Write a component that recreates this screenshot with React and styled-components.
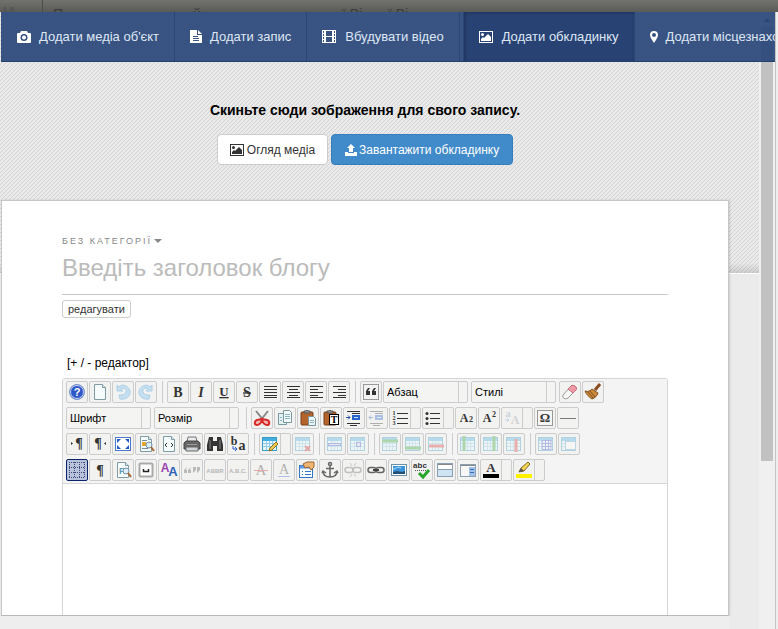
import React, { useState } from 'react';
import styled, { createGlobalStyle, css } from 'styled-components';

const GlobalStyle = createGlobalStyle`
  * {
    box-sizing: border-box;
  }

  body {
    margin: 0;
    overflow: hidden;
    background: #eee;
    font-family: "Liberation Sans", Arial, sans-serif;
    font-size: 12px;
    color: #000;
  }

  button,
  input,
  select {
    font-family: inherit;
  }
`;

const Page = styled.div`
  display: flex;
  flex-direction: column;
  height: 100vh;
`;

const Backdrop = styled.div`
  display: flex;
  flex: none;
  height: 12px;
  padding-top: 7px;
  overflow: hidden;
  background: linear-gradient(#72726f, #5a5a57);
  color: #3c3c3a;
  font-size: 14px;
  line-height: 14px;
`;

const BackdropLogo = styled.b`
  width: 43px;
  margin-top: -7px;
  padding: 5px 0 0 3px;
  border-right: 1px solid #4c4c4a;
  color: #555553;
`;

const BackdropText = styled.span`
  width: ${props => props.$width}px;
  padding-left: 10px;
`;

const Window = styled.div`
  position: relative;
  display: flex;
  flex: 1;
  min-height: 0;
`;

const Nav = styled.nav`
  position: absolute;
  z-index: 2;
  top: 0;
  left: 1px;
  right: 3px;
  display: flex;
  height: 50px;
  overflow: hidden;
  border-bottom: 1px solid #24406f;
  background: rgba(41, 70, 120, 0.92);
`;

const NavItem = styled.button`
  display: flex;
  flex: none;
  align-items: center;
  gap: 8px;
  padding: 0 15px;
  border: 0;
  border-right: 1px solid #2b4672;
  background: transparent;
  color: #dfe7f5;
  font-size: 13px;
  cursor: pointer;

  svg {
    fill: #fff;
  }

  ${props =>
    props.$active &&
    css`
      margin-left: 3px;
      border-left: 1px solid #2b4672;
      background: #284273;
      box-shadow: inset 1px 1px 3px #1d335c;
    `}
`;

const Scroller = styled.div`
  display: flex;
  flex: 1;
  flex-direction: column;
  min-width: 0;
  background: #ebebeb;
`;

const Cover = styled.section`
  display: flex;
  flex: none;
  flex-direction: column;
  align-items: center;
  height: 262px;
  padding: 90px 30px 0 1px;
  border-bottom: 1px solid #fff;
  background:
    linear-gradient(transparent 251px, rgba(0, 0, 0, 0.12)),
    linear-gradient(135deg, #d3d3d3 19%, #eaeaea 19% 56%, #d3d3d3 56% 69%, #eaeaea 69%) 0 0 / 4px 4px;
`;

const CoverTitle = styled.h1`
  margin: 0 0 16px;
  font-size: 14px;
  line-height: 16px;
`;

const CoverActions = styled.div`
  display: flex;
  gap: 3px;
`;

const CoverButton = styled.button`
  display: flex;
  align-items: center;
  gap: 2px;
  height: 31px;
  padding: 0 ${props => (props.$primary ? 13 : 12)}px;
  border: 1px solid ${props => (props.$primary ? '#357ebd' : '#ccc')};
  border-radius: 4px;
  background: ${props => (props.$primary ? '#428bca' : '#fff')};
  color: ${props => (props.$primary ? '#fff' : '#333')};
  font-size: 12px;
  cursor: pointer;

  svg {
    fill: currentColor;
  }
`;

const Card = styled.main`
  display: flex;
  flex: 1;
  flex-direction: column;
  min-height: 0;
  margin: -74px 30px 0 1px;
  padding: 33px 60px 0;
  border: 1px solid #c6c6c6;
  border-bottom-color: #b8b8b8;
  background: #fff;
  box-shadow: 1px 0 2px rgba(0, 0, 0, 0.12);
`;

const Category = styled.button`
  display: flex;
  align-items: center;
  align-self: flex-start;
  gap: 2px;
  height: 14px;
  padding: 0;
  border: 0;
  background: none;
  color: #888;
  font-size: 9px;
  letter-spacing: 2px;
  text-transform: uppercase;

  &::after {
    content: '';
    border: 4px solid transparent;
    border-top-color: #888;
    border-bottom: 0;
  }
`;

const TitleInput = styled.input`
  width: 100%;
  height: 47px;
  padding: 0 0 6px;
  border: 0;
  border-bottom: 1px solid #c8c8c8;
  outline: none;
  background: none;
  font-size: 24px;

  &::placeholder {
    color: #bbb;
    opacity: 1;
  }
`;

const EditButton = styled.button`
  align-self: flex-start;
  height: 18px;
  margin: 5px 0 38px;
  padding: 0 5px;
  border: 1px solid #ccc;
  border-radius: 3px;
  background: #fff;
  color: #333;
  font-size: 11px;
  line-height: 14px;
`;

const ToggleLink = styled.a`
  align-self: flex-start;
  margin: 0 5px 7px;
  color: #000;
  font-size: 12px;
  line-height: 15px;
  text-decoration: none;
`;

const Editor = styled.div`
  display: flex;
  flex: 1;
  flex-direction: column;
  min-height: 0;
  border: 1px solid #d6d6d6;
  border-bottom: 0;
  border-radius: 3px 3px 0 0;
`;

const Toolbar = styled.div`
  display: flex;
  flex: none;
  flex-direction: column;
  gap: 4px;
  padding: 2px 3px;
  border-bottom: 1px solid #d6d6d6;
  background: #f4f4f4;
`;

const ToolRow = styled.div`
  display: flex;
  gap: 1px;
  height: 22px;
`;

const Tool = styled.button`
  display: flex;
  flex: none;
  width: ${props => (props.$split ? 32 : 22)}px;
  height: 22px;
  padding: 0;
  border: 1px solid #ccc;
  border-radius: 2px;
  background: #f2f2f1;

  svg {
    flex: none;
    opacity: ${props => (props.disabled ? 0.35 : 1)};
  }

  ${props =>
    props.$split &&
    css`
      &::after {
        content: '';
        height: 20px;
        border-left: 1px solid #ccc;
      }
    `}

  ${props =>
    props.$active &&
    css`
      border-color: #0a246a;
      background: #b9c3dc;
    `}
`;

const Separator = styled.span`
  width: 1px;
  margin: 0 3px 0 4px;
  background: #ccc;
`;

const ListBox = styled.label`
  display: flex;
  width: 85px;
  height: 22px;
  margin-right: 2px;
  padding-right: 8px;
  border: 1px solid #ccc;
  border-radius: 2px;
  background: #f4f4f3;

  select {
    width: 75px;
    padding: 0 0 0 3px;
    border: 0;
    border-right: 1px solid #ccc;
    appearance: none;
    background: none;
    color: #000;
    font-size: 11px;
  }
`;

const EditArea = styled.div`
  flex: 1;
  outline: none;
`;

const Footer = styled.footer`
  flex: none;
  height: 13px;
  margin-right: 30px;
  background: #eee;
`;

const ScrollTrack = styled.div`
  width: 16px;
  padding: 6px 2px 0;
  background: #f0f0f0;

  &::before {
    content: '';
    display: block;
    width: 0;
    margin: 0 2px 5px;
    border: 4px solid transparent;
    border-top: 0;
    border-bottom-color: #505050;
  }
`;

const ScrollThumb = styled.div`
  height: 71%;
  background: #c1c1c1;
`;

const Edge = styled.div`
  width: 3px;
  border-left: 1px solid #c4c4c4;
  background: #eee;
`;

const SERIF = '"Liberation Serif", "Times New Roman", serif';

function Svg({ children }) {
  return (
    <svg width="20" height="20" viewBox="0 0 20 20" fill="none" aria-hidden="true">
      {children}
    </svg>
  );
}

function Glyph({ children, x = 10, y = 15, size = 14, ...rest }) {
  return (
    <text x={x} y={y} fontSize={size} fontFamily={SERIF} fontWeight="bold" fill="#333" textAnchor="middle" {...rest}>
      {children}
    </text>
  );
}

function Lines({ rows, color = '#333', width = 1 }) {
  return rows.map(([x, y, w]) => <rect key={`${x}-${y}`} x={x} y={y} width={w} height={width} fill={color} />);
}

const sheet = (
  <>
    <path d="M4.5 2.500h8l3 3v12h-11z" fill="#f6fbfc" stroke="#7f9ba3" />
    <path d="M12.500 2.500v3h3" fill="#dcebee" stroke="#7f9ba3" />
  </>
);

const grid = (
  <>
    <rect x="2.500" y="3.500" width="14" height="13" fill="#e9f6fc" stroke="#3b9cc6" />
    <path d="M3 5.500h13" stroke="#42aee0" strokeWidth="3" />
    <path d="M3 9.500h13M3 12.500h13M6.500 7v9M9.500 7v9M12.500 7v9" stroke="#8fcbe6" />
  </>
);

const lens = (
  <>
    <circle cx="13" cy="11" r="3" fill="#d9eef8" stroke="#7290a6" />
    <path d="M15 13l3 4" stroke="#a9672f" strokeWidth="2" />
  </>
);

const clipboard = (
  <>
    <rect x="3" y="4" width="12" height="13" rx="1" fill="#b4642a" stroke="#74401b" />
    <path d="M6 5V3h2l1-1 1 1h2v2z" fill="#999" stroke="#555" />
  </>
);

const chain = (
  <>
    <rect x="2" y="7.500" width="8" height="5" rx="2.500" stroke="#666" strokeWidth="1.500" />
    <rect x="10" y="7.500" width="8" height="5" rx="2.500" stroke="#666" strokeWidth="1.500" />
  </>
);

const icons = {
  help: (
    <>
      <circle cx="10" cy="10" r="7.500" fill="#2e57c8" stroke="#8196c8" />
      <circle cx="10" cy="10" r="6.500" stroke="#c9d6f5" />
      <text x="10" y="14" fontSize="11" fontWeight="bold" fill="#fff" textAnchor="middle">?</text>
    </>
  ),
  newPage: sheet,
  undo: <path d="M4 3v6h6L8 7c3-2 6 0 5 3s-4 3-7 3l1 4c6 1 11-3 10-8S9 1 6 5z" fill="#72bdf2" stroke="#2f92d6" />,
  redo: <path d="M16 3v6h-6l2-2C9 5 6 7 7 10s4 3 7 3l-1 4C7 18 2 14 3 9s8-8 11-4z" fill="#72bdf2" stroke="#2f92d6" />,
  bold: <Glyph>B</Glyph>,
  italic: <Glyph fontStyle="italic">I</Glyph>,
  underline: <Glyph y={14} size={13} textDecoration="underline">U</Glyph>,
  strike: <Glyph textDecoration="line-through">S</Glyph>,
  full: <Lines rows={[[4, 4, 13], [4, 7, 13], [4, 10, 13], [4, 13, 13], [4, 15, 13]]} />,
  center: <Lines rows={[[4, 4, 13], [6, 7, 9], [4, 10, 13], [6, 13, 9], [4, 15, 13]]} />,
  left: <Lines rows={[[4, 4, 13], [4, 7, 8], [4, 10, 13], [4, 13, 8], [4, 15, 13]]} />,
  right: <Lines rows={[[4, 4, 13], [9, 7, 8], [4, 10, 13], [9, 13, 8], [4, 15, 13]]} />,
  quote: (
    <>
      <rect x="2.500" y="2.500" width="15" height="15" fill="#f3f3f3" stroke="#999" />
      <path d="M9 6H7L5 9v4h4V9H7zM15 6h-2l-2 3v4h4V9h-2z" fill="#333" />
    </>
  ),
  eraser: (
    <>
      <path d="M3 13l8-9c2-2 7 1 5 4l-8 8c-3 2-6 0-5-3z" fill="#f7f7f7" stroke="#999" />
      <path d="M8 7l3-3c2-2 7 1 5 4l-3 3z" fill="#ef9aa5" stroke="#c8707c" />
    </>
  ),
  broom: (
    <>
      <path d="M12 8l5-6" stroke="#8a4d1f" strokeWidth="3" />
      <path d="M2 9c3 1 5 0 7-2l6 4c-1 3-3 5-6 6-3-2-6-5-7-8z" fill="#c98a3c" stroke="#84501d" />
      <path d="M5 10l5 6M7 9l5 6" stroke="#84501d" />
    </>
  ),
  cut: (
    <>
      <path d="M4 3l8 10M16 3L8 13" stroke="#888" strokeWidth="2" />
      <path d="M10 11l-5 1c-3 1-3 5 0 5s4-2 5-5zM10 11l5 1c3 1 3 5 0 5s-4-2-5-5z" fill="#f3b9b5" stroke="#d62a26" strokeWidth="2" />
    </>
  ),
  copy: (
    <>
      <path d="M3.500 5.500h8v11h-8z" fill="#e2f2f4" stroke="#79979e" />
      <path d="M8.500 2.500h6l2 2v10h-8z" fill="#f2fafb" stroke="#79979e" />
      <path d="M10 6.500h5M10 8.500h5M10 10.500h5M5 9.500h2M5 12.500h2" stroke="#8fb5c3" />
    </>
  ),
  paste: (
    <>
      {clipboard}
      <path d="M10.500 8.500h5l2 2v7h-7z" fill="#edf5f6" stroke="#79979e" />
      <path d="M12 12.500h4M12 14.500h4" stroke="#8fb5c3" />
    </>
  ),
  pasteText: (
    <>
      {clipboard}
      <rect x="8.500" y="6.500" width="9" height="10" fill="#fff" stroke="#000" />
      <Glyph x={13} size={10} fill="#000">T</Glyph>
    </>
  ),
  indent: (
    <>
      <Lines rows={[[3, 3, 13], [3, 15, 13], [6, 17, 7], [8, 5, 8]]} />
      <path d="M2 9.500h4M4 7.500l2 2-2 2" stroke="#2450a8" />
      <rect x="9" y="8" width="6" height="3" fill="#cddcf8" stroke="#2862cc" strokeWidth="2" />
    </>
  ),
  outdent: (
    <>
      <Lines rows={[[3, 3, 13], [3, 15, 13], [6, 17, 7], [8, 5, 8]]} />
      <path d="M2 9.500h4M4 7.500l-2 2 2 2" stroke="#2450a8" />
      <rect x="9" y="8" width="6" height="3" fill="#cddcf8" stroke="#2862cc" strokeWidth="2" />
    </>
  ),
  numbers: (
    <>
      <Lines rows={[[7, 5, 11], [7, 10, 11], [7, 15, 11]]} />
      <Glyph x={4} y={7} size={6}>1</Glyph>
      <Glyph x={4} y={12} size={6}>2</Glyph>
      <Glyph x={4} y={17} size={6}>3</Glyph>
    </>
  ),
  bullets: (
    <>
      <Lines rows={[[7, 5, 10], [7, 10, 10], [7, 15, 10]]} />
      <circle cx="4" cy="5.500" r="1.500" fill="#333" />
      <circle cx="4" cy="10.500" r="1.500" fill="#333" />
      <circle cx="4" cy="15.500" r="1.500" fill="#333" />
    </>
  ),
  sub: (
    <>
      <Glyph x={8} y={14} size={12}>A</Glyph>
      <Glyph x={15} y={14} size={8}>2</Glyph>
    </>
  ),
  sup: (
    <>
      <Glyph x={8} y={14} size={12}>A</Glyph>
      <Glyph x={15} y={9} size={8}>2</Glyph>
    </>
  ),
  letterCase: (
    <>
      <Glyph x={6} y={9} size={11} fill="#8c9bb8">a</Glyph>
      <Glyph x={13} y={16} size={12} fill="#999">A</Glyph>
      <path d="M3 12h4M5 10l2 2-2 2" stroke="#7e9ddb" />
    </>
  ),
  omega: (
    <>
      <rect x="2.500" y="2.500" width="15" height="15" fill="#f5f5f5" stroke="#999" />
      <Glyph y={14} size={13}>Ω</Glyph>
    </>
  ),
  rule: <path d="M2 10.500h16" stroke="#777" />,
  ltr: (
    <>
      <Glyph x={12} y={14}>¶</Glyph>
      <path d="M4 8l2 1.500L4 11z" fill="#333" />
    </>
  ),
  rtl: (
    <>
      <Glyph x={8} y={14}>¶</Glyph>
      <path d="M16 8l-2 1.500 2 1.500z" fill="#333" />
    </>
  ),
  fullscreen: (
    <>
      <rect x="2.500" y="3.500" width="15" height="13" fill="#fff" stroke="#4b78d0" />
      <path d="M4 9V5h4zM16 9V5h-4zM4 11v4h4zM16 11v4h-4z" fill="#2458c5" />
    </>
  ),
  preview: (
    <>
      {sheet}
      <rect x="6" y="8" width="4" height="4" fill="#e5a631" />
      <path d="M6 6.500h5M6 14.500h6" stroke="#789" />
      {lens}
    </>
  ),
  code: (
    <>
      {sheet}
      <path d="M8 9l-2 2 2 2M12 9l2 2-2 2" stroke="#333" />
    </>
  ),
  print: (
    <>
      <path d="M6 3h8l1 5H5z" fill="#e9edef" stroke="#777" />
      <path d="M2 9l2-2h12l2 2v6H2z" fill="#666" stroke="#444" />
      <path d="M4 13h12v4H4z" fill="#cfd5d8" stroke="#666" />
      <path d="M5 10.500h10" stroke="#999" />
    </>
  ),
  find: (
    <>
      <path d="M4 3h4v4h4V3h4l2 8v6h-6v-5H8v5H2v-6z" fill="#333" />
      <path d="M5 6v9M15 6v9" stroke="#858585" />
    </>
  ),
  replace: (
    <>
      <Glyph x={6} y={11} size={12}>b</Glyph>
      <Glyph x={14} y={16} size={14}>a</Glyph>
      <path d="M5 12v3h4M7 13l2 2-2 2" stroke="#2c5dcb" />
    </>
  ),
  table: (
    <>
      {grid}
      <path d="M9 17l1-3 6-6 2 2-6 6z" fill="#f3cf52" stroke="#8b6a1c" />
    </>
  ),
  tableDelete: (
    <>
      {grid}
      <path d="M12 12l5 5M17 12l-5 5" stroke="#d02525" strokeWidth="2" />
    </>
  ),
  rowProps: (
    <>
      {grid}
      <rect x="3.500" y="9.500" width="12" height="2" fill="#cfd8ff" stroke="#4054c8" />
    </>
  ),
  cellProps: (
    <>
      {grid}
      <rect x="8.500" y="8.500" width="4" height="4" fill="#cfd8ff" stroke="#4054c8" />
    </>
  ),
  rowBefore: (
    <>
      {grid}
      <path d="M2 7h16" stroke="#2ea52e" strokeWidth="3" />
    </>
  ),
  rowAfter: (
    <>
      {grid}
      <path d="M2 14h16" stroke="#2ea52e" strokeWidth="3" />
    </>
  ),
  rowDelete: (
    <>
      {grid}
      <path d="M3 12h15" stroke="#d83535" strokeWidth="3" />
    </>
  ),
  colBefore: (
    <>
      {grid}
      <path d="M6 2v15" stroke="#2ea52e" strokeWidth="3" />
    </>
  ),
  colAfter: (
    <>
      {grid}
      <path d="M13 2v15" stroke="#2ea52e" strokeWidth="3" />
    </>
  ),
  colDelete: (
    <>
      {grid}
      <path d="M12 5v13" stroke="#d83535" strokeWidth="3" />
    </>
  ),
  splitCells: (
    <>
      {grid}
      <path d="M6 6.500h9v9H6zM9.500 6v10M12.500 6v10M6 9.500h9M6 12.500h9" stroke="#4054c8" />
    </>
  ),
  mergeCells: (
    <>
      {grid}
      <rect x="6.500" y="7.500" width="10" height="8" fill="#fff" stroke="#5ba7cb" />
    </>
  ),
  guides: (
    <path
      d="M2.500 2v16M7.500 2v16M12.500 2v16M17.500 2v16M2 2.500h16M2 7.500h16M2 12.500h16M2 17.500h16"
      stroke="#3c4c78"
      strokeDasharray="1 1"
    />
  ),
  pilcrow: <Glyph>¶</Glyph>,
  pageBreak: (
    <>
      {sheet}
      <text x="9" y="14" fontSize="9" fontWeight="bold" fill="#5a9bb8" textAnchor="middle">P</text>
      {lens}
    </>
  ),
  nbsp: (
    <>
      <rect x="3.500" y="3.500" width="13" height="13" rx="1" fill="#fff" stroke="#aaa" strokeWidth="2" />
      <path d="M7.500 9v2.500h5V9" stroke="#222" strokeWidth="1.500" />
    </>
  ),
  styleProps: (
    <>
      <text x="6" y="12" fontSize="12" fontWeight="bold" fill="#9a3fb0" textAnchor="middle">A</text>
      <text x="14" y="16" fontSize="13" fontWeight="bold" fill="#2c62b8" textAnchor="middle">A</text>
    </>
  ),
  cite: <path d="M5 7L2 10v3h3v-3H4zM9 7l-3 3v3h3v-3H8zM11 7h3v3l-3 3v-3zM15 7h3v3l-3 3v-3z" fill="#555" />,
  abbr: <text x="10" y="13" fontSize="6" fontWeight="bold" fill="#444" textAnchor="middle">ABBR</text>,
  acronym: <text x="10" y="13" fontSize="6" fontWeight="bold" fill="#444" textAnchor="middle">A.B.C.</text>,
  del: (
    <>
      <Glyph size={15} fontWeight="normal">A</Glyph>
      <path d="M3 10.500h14" stroke="#d02020" />
    </>
  ),
  ins: (
    <>
      <Glyph y={14} fontWeight="normal">A</Glyph>
      <path d="M4 16.500h12" stroke="#3c5ed0" />
    </>
  ),
  attributes: (
    <>
      <rect x="2.500" y="5.500" width="13" height="12" fill="#f7fbff" stroke="#3475c4" />
      <path d="M3 7h12" stroke="#5d9be6" strokeWidth="3" />
      <path d="M5 11.500h1M8 11.500h6M5 14.500h1M8 14.500h6" stroke="#3475c4" />
      <path d="M6 4l4-2h7v5l-3 3-2-3-4 1z" fill="#eeb672" stroke="#9a6430" />
    </>
  ),
  anchor: (
    <>
      <circle cx="10" cy="4" r="1.500" stroke="#666" strokeWidth="1.500" />
      <path d="M10 6v11M6 8.500h8M3 11c0 4 3 6 7 6s7-2 7-6M2 13l1-2 3 2M18 13l-1-2-3 2" stroke="#666" strokeWidth="1.500" />
    </>
  ),
  unlink: (
    <>
      {chain}
      <path d="M7 3l2 3M13 3l-2 3M7 17l2-3M13 17l-2-3" stroke="#777" />
    </>
  ),
  link: (
    <>
      {chain}
      <path d="M7 10h6" stroke="#444" strokeWidth="2" />
    </>
  ),
  image: (
    <>
      <rect x="2.500" y="4.500" width="15" height="11" fill="#fff" stroke="#6d8fa8" />
      <rect x="4" y="6" width="12" height="8" fill="#3d93d8" />
      <path d="M4 14v-2l4-1 5 1 3-1v3z" fill="#204f78" />
      <path d="M4 9c3 0 4-3 8-1" stroke="#bce4fb" />
    </>
  ),
  spell: (
    <>
      <text x="8" y="8" fontSize="8" fontWeight="bold" fill="#333" textAnchor="middle">abc</text>
      <path d="M3 10.500h11" stroke="#555" strokeDasharray="1 1" />
      <path d="M7 13l4 4 6-7" stroke="#27a52b" strokeWidth="3" />
    </>
  ),
  layer: (
    <>
      <rect x="2.500" y="3.500" width="15" height="13" fill="#fff" stroke="#8a9fb0" />
      <path d="M3 4.500h14" stroke="#888" />
      <path d="M3 10h14v6H3z" fill="#cfe4f3" />
      <path d="M3 9.500h14" stroke="#8a9fb0" />
    </>
  ),
  article: (
    <>
      <rect x="2.500" y="4.500" width="15" height="12" fill="#f7f7f7" stroke="#8a9fb0" />
      <path d="M3 5.500h14" stroke="#888" />
      <path d="M11 7h6v9h-6z" fill="#9fc1ea" />
      <path d="M12 9.500h4M12 12.500h4" stroke="#3869b1" />
    </>
  ),
  foreColor: (
    <>
      <Glyph y={12} size={13}>A</Glyph>
      <rect x="2" y="14" width="16" height="4" fill="#000" />
    </>
  ),
  backColor: (
    <>
      <rect x="2" y="14" width="16" height="4" fill="#fff200" />
      <path d="M5 12l2-4 7-6 2 2-6 7z" fill="#f4d34e" stroke="#806a31" />
      <path d="M5 12l2-4 3 3z" fill="#555" />
    </>
  ),
};

// '|' draws a separator, a trailing '+' a drop-down part, a leading '-' the disabled state
const toolRows = [
  ['help', 'newPage', '-undo', '-redo', '|', 'bold', 'italic', 'underline', 'strike', 'full', 'center', 'left', 'right', '|', 'quote', { list: 'Абзац' }, { list: 'Стилі' }, 'eraser', 'broom'],
  [{ list: 'Шрифт' }, { list: 'Розмір' }, '|', 'cut', 'copy', 'paste', 'pasteText', 'indent', '-outdent', 'numbers+', 'bullets+', 'sub', 'sup', '-letterCase+', 'omega', 'rule'],
  ['ltr', 'rtl', 'fullscreen', 'preview', 'code', 'print', 'find', 'replace', '|', 'table+', '-tableDelete', '|', '-rowProps', '-cellProps', '|', '-rowBefore', '-rowAfter', '-rowDelete', '|', '-colBefore', '-colAfter', '-colDelete', '|', '-splitCells', '-mergeCells'],
  ['guides', 'pilcrow', 'pageBreak', 'nbsp', 'styleProps', '-cite', '-abbr', '-acronym', '-del', '-ins', 'attributes', 'anchor', '-unlink', 'link', 'image', 'spell', 'layer', 'article', 'foreColor+', 'backColor+'],
];

function ToolItem({ item, active, onToggle }) {
  if (item === '|') return <Separator />;
  if (item.list) {
    return (
      <ListBox>
        <select aria-label={item.list}>
          <option>{item.list}</option>
        </select>
      </ListBox>
    );
  }
  const name = item.replace(/[-+]/g, '');
  return (
    <Tool
      type="button"
      aria-label={name}
      disabled={item.startsWith('-')}
      $split={item.endsWith('+')}
      $active={active}
      onClick={onToggle}
    >
      <Svg>{icons[name]}</Svg>
    </Tool>
  );
}

function PictureIcon() {
  return (
    <svg width="15" height="12" viewBox="0 0 15 12" aria-hidden="true">
      <path fillRule="evenodd" d="M0 0h14v12H0zM1 1v10h12V1z" />
      <path d="M2 10V8l2-2 1 1 4-4 3 3v4z" />
      <circle cx="3.500" cy="3.500" r="1.500" />
    </svg>
  );
}

const navItems = [
  {
    label: "Додати медіа об'єкт",
    icon: (
      <svg width="15" height="12" viewBox="0 0 15 12" aria-hidden="true">
        <path fillRule="evenodd" d="M5 0h6l1 2h2q1 0 1 1v8q0 1-1 1H2q-1 0-1-1V3q0-1 1-1h2zM8 3a3.500 3.500 0 1 0 0 7 3.500 3.500 0 0 0 0-7zm0 1.500a2 2 0 1 1 0 4 2 2 0 0 1 0-4z" />
      </svg>
    ),
  },
  {
    label: 'Додати запис',
    icon: (
      <svg width="12" height="13" viewBox="0 0 12 13" aria-hidden="true">
        <path fillRule="evenodd" d="M0 0h7v5h5v8H0zM3 6v1h5V6zm0 2v1h6V8zm0 2v1h6v-1z" />
        <path d="M8 0l4 4H8z" />
      </svg>
    ),
  },
  {
    label: 'Вбудувати відео',
    icon: (
      <svg width="15" height="13" viewBox="0 0 15 13" aria-hidden="true">
        <path fillRule="evenodd" d="M0 0h14v13H0zM1 1v2h1V1zm0 3v2h1V4zm0 3v2h1V7zm0 3v2h1v-2zM12 1v2h1V1zm0 3v2h1V4zm0 3v2h1V7zm0 3v2h1v-2zM4 1v5h6V1zm0 6v5h6V7z" />
      </svg>
    ),
  },
  { label: 'Додати обкладинку', icon: <PictureIcon /> },
  {
    label: 'Додати місцезнаходження',
    icon: (
      <svg width="8" height="12" viewBox="0 0 8 12" aria-hidden="true">
        <path fillRule="evenodd" d="M4 0a4 4 0 0 1 4 4c0 2-2 5-4 8C2 9 0 6 0 4a4 4 0 0 1 4-4zm0 2a2 2 0 1 0 0 4 2 2 0 0 0 0-4z" />
      </svg>
    ),
  },
];

function App() {
  const [tab, setTab] = useState(3);
  const [guides, setGuides] = useState(true);
  const [title, setTitle] = useState('');

  return (
    <>
      <GlobalStyle />
      <Page>
        <Backdrop aria-hidden="true">
          <BackdropLogo>ІА</BackdropLogo>
          <BackdropText $width={140}>П</BackdropText>
          <BackdropText $width={149}>й</BackdropText>
          <BackdropText $width={46}>ї Ві</BackdropText>
          <BackdropText $width={46}>ї Ві</BackdropText>
        </Backdrop>
        <Window>
          <Nav>
            {navItems.map((item, i) => (
              <NavItem key={item.label} type="button" $active={i === tab} onClick={() => setTab(i)}>
                {item.icon}
                {item.label}
              </NavItem>
            ))}
          </Nav>
          <Scroller>
            <Cover>
              <CoverTitle>Скиньте сюди зображення для свого запису.</CoverTitle>
              <CoverActions>
                <CoverButton type="button">
                  <PictureIcon />
                  Огляд медіа
                </CoverButton>
                <CoverButton type="button" $primary>
                  <svg width="12" height="12" viewBox="0 0 12 12" aria-hidden="true">
                    <path d="M6 0l4 4H8v4H4V4H2zM0 8h3v1h6V8h3v4H0z" />
                  </svg>
                  Завантажити обкладинку
                </CoverButton>
              </CoverActions>
            </Cover>
            <Card>
              <Category type="button">Без категорії</Category>
              <TitleInput
                aria-label="Заголовок"
                placeholder="Введіть заголовок блогу"
                value={title}
                onChange={(e) => setTitle(e.target.value)}
              />
              <EditButton type="button">редагувати</EditButton>
              <ToggleLink href="#editor">[+ / - редактор]</ToggleLink>
              <Editor id="editor">
                <Toolbar>
                  {toolRows.map((row, r) => (
                    <ToolRow key={r}>
                      {row.map((item, i) => (
                        <ToolItem
                          key={i}
                          item={item}
                          active={item === 'guides' && guides}
                          onToggle={item === 'guides' ? () => setGuides(!guides) : undefined}
                        />
                      ))}
                    </ToolRow>
                  ))}
                </Toolbar>
                <EditArea contentEditable suppressContentEditableWarning role="textbox" aria-label="Текст" />
              </Editor>
            </Card>
            <Footer />
          </Scroller>
          <ScrollTrack>
            <ScrollThumb />
          </ScrollTrack>
          <Edge />
        </Window>
      </Page>
    </>
  );
}

export default App;
